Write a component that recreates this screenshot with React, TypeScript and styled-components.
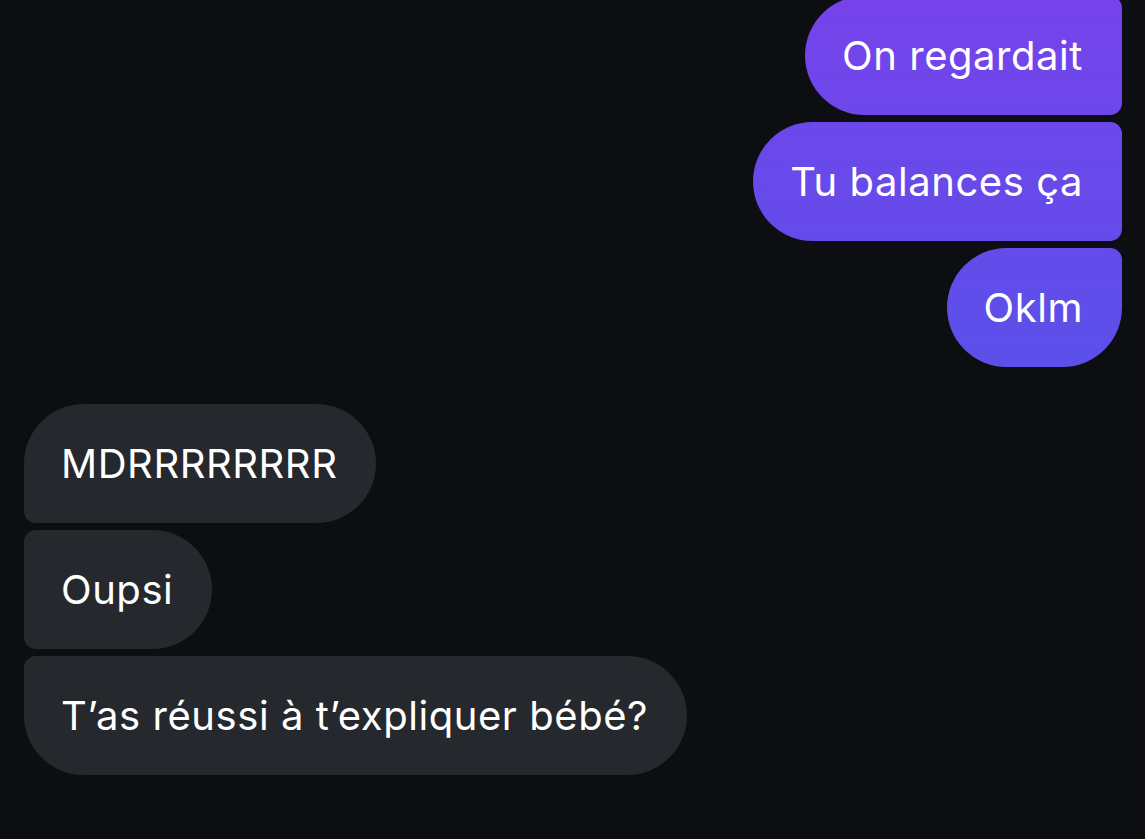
import React from "react";
import styled, { createGlobalStyle, css } from "styled-components";

type Side = "out" | "in";
type Place = "first" | "middle" | "last" | "single";

type Message = {
  id: number;
  text: string;
};

type Group = {
  side: Side;
  messages: Message[];
  // the group continues above the visible area
  continued?: boolean;
};

const GlobalStyle = createGlobalStyle`
  html, body {
    margin: 0;
    padding: 0;
    background: #0c0e12;
    overflow: hidden;
  }
  body {
    font-family: Inter, "Noto Sans", "Liberation Sans", sans-serif;
    -webkit-font-smoothing: antialiased;
  }
`;

const Thread = styled.div`
  display: flex;
  flex-direction: column;
  gap: 37px;
  padding: 0 23px 0 24px;
  margin-top: -4px;
  height: 843px;
  box-sizing: border-box;
`;

const Stack = styled.div<{ $side: Side }>`
  display: flex;
  flex-direction: column;
  gap: 7px;
  align-items: ${(p) => (p.$side === "out" ? "flex-end" : "flex-start")};
`;

const BIG = "60px";
const SMALL = "12px";

const corners = (side: Side, place: Place) => {
  const top = place === "first" || place === "single" ? BIG : SMALL;
  const bottom = place === "last" || place === "single" ? BIG : SMALL;
  // tl tr br bl
  return side === "out"
    ? `${BIG} ${top} ${bottom} ${BIG}`
    : `${top} ${BIG} ${BIG} ${bottom}`;
};

const Bubble = styled.div<{ $side: Side; $place: Place }>`
  display: flex;
  align-items: center;
  box-sizing: border-box;
  height: 119px;
  padding: 0 39px 0 37px;
  font-size: 40px;
  letter-spacing: 0.55px;
  color: #ffffff;
  white-space: nowrap;
  border-radius: ${(p) => corners(p.$side, p.$place)};
  ${(p) =>
    p.$side === "out"
      ? css`
          background: linear-gradient(180deg, #7543ea 0px, #5b50e9 370px);
          background-attachment: fixed;
        `
      : css`
          background: #25282c;
        `}
`;

const groups: Group[] = [
  {
    side: "out",
    continued: true,
    messages: [
      { id: 1, text: "On regardait" },
      { id: 2, text: "Tu balances ça" },
      { id: 3, text: "Oklm" },
    ],
  },
  {
    side: "in",
    messages: [
      { id: 4, text: "MDRRRRRRRR" },
      { id: 5, text: "Oupsi" },
      { id: 6, text: "T\u2019as réussi à t\u2019expliquer bébé?" },
    ],
  },
];

const placeOf = (i: number, count: number, continued?: boolean): Place => {
  const first = i === 0 && !continued;
  const last = i === count - 1;
  if (first && last) return "single";
  if (first) return "first";
  if (last) return "last";
  return "middle";
};

export default function App() {
  return (
    <>
      <GlobalStyle />
      <Thread>
        {groups.map((g, gi) => (
          <Stack key={gi} $side={g.side}>
            {g.messages.map((m, i) => (
              <Bubble
                key={m.id}
                $side={g.side}
                $place={placeOf(i, g.messages.length, g.continued)}
              >
                {m.text}
              </Bubble>
            ))}
          </Stack>
        ))}
      </Thread>
    </>
  );
}
